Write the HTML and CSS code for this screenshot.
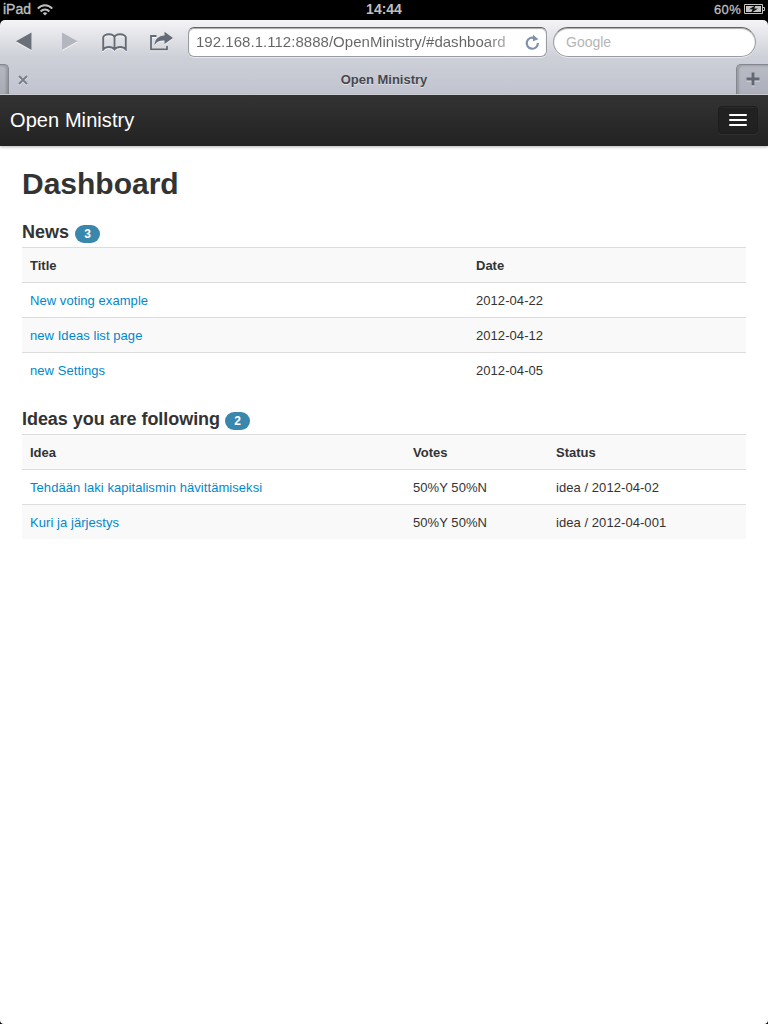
FILE: index.html
```html
<!DOCTYPE html>
<html lang="en">
<head>
<meta charset="utf-8">
<title>Open Ministry</title>
<link rel="stylesheet" href="styles.css">
</head>
<body>
<div class="device">
  <div class="status">
    <div class="status-left"><span class="carrier">iPad</span>
      <svg width="16" height="12" viewBox="0 0 16 12" fill="none" stroke="#bfbfbf" stroke-width="2"><path d="M.8 4.600C5 .2 11 .2 15.200 4.600"/><path d="M3.600 7.500c2.500-2.600 6.300-2.600 8.800 0"/><path d="M8 11.500 5.700 9.300c1.400-1.300 3.200-1.300 4.600 0z" fill="#bfbfbf" stroke="none"/></svg>
    </div>
    <div class="clock">14:44</div>
    <div class="status-right"><span class="percent">60%</span>
      <svg class="battery" width="21" height="11" viewBox="0 0 21 11"><path d="M.5.5h18v9H.5zM19 3.500h1.500v3H19" fill="none" stroke="#c4c4c4"/><path d="M2 2h15v6H2z" fill="#c4c4c4"/><path d="M11.500 1.200 5 5.300h3.600L7 9l7-4.600h-3.700z" fill="#111"/></svg>
    </div>
  </div>
  <div class="chrome">
    <div class="toolbar">
      <div class="tools">
        <svg class="tool back" width="16" height="19" viewBox="0 0 16 19"><path d="M15.500.5v17.500L0 9.200z" fill="#69707a"/></svg>
        <svg class="tool forward" width="16" height="19" viewBox="0 0 16 19"><path d="M0 .5v17.500l15.500-8.800z" fill="#b3b6bf"/></svg>
        <svg class="tool book" width="25" height="18" viewBox="0 0 25 18" fill="none" stroke="#646b76" stroke-width="1.900"><path d="M12.500 4.200C11 .2 3 .2 1.200 4.200v12.300c2.500-3.300 8.800-3.300 11.300 0 2.500-3.300 8.800-3.300 11.300 0V4.200C22 .2 14 .2 12.500 4.200zV16.500"/></svg>
        <svg class="tool share" width="25" height="20" viewBox="0 0 25 20"><path d="M7.500 5H2v13.300h16V15" fill="none" stroke="#646b76" stroke-width="1.800"/><path d="M15.500.8 24 7l-8.500 6V9.600c-4.500-.2-8 1.200-10 4.600.3-6 4-9.300 10-9.700z" fill="#646b76"/></svg>
      </div>
      <div class="address"><span class="url">192.168.1.112:8888/OpenMinistry/#dashboard</span>
        <svg width="15" height="17" viewBox="0 0 15 17"><path d="M9.500 4A5.600 5.600 0 1 0 12.900 9" fill="none" stroke="#7d90ae" stroke-width="2.200"/><path d="M8 .8 13.400 5.200 8 7.200z" fill="#7d90ae"/></svg>
      </div>
      <div class="search">Google</div>
    </div>
    <div class="tabs">
      <div class="tab-edge"></div>
      <div class="tab">
        <svg class="close" width="10" height="10" viewBox="0 0 10 10"><path d="m1 1 8 8M9 1 1 9" stroke="#7b7f88" stroke-width="2"/></svg>
        <span class="tab-title">Open Ministry</span>
      </div>
      <div class="tab-new"><svg class="plus" width="14" height="14" viewBox="0 0 14 14"><path d="M7 .5v13M.5 7h13" stroke="#626873" stroke-width="3"/></svg></div>
    </div>
  </div>
  <div class="navbar">
    <span class="brand">Open Ministry</span>
    <div class="menu"><i class="bar"></i><i class="bar"></i><i class="bar"></i></div>
  </div>
  <main class="page">
    <h1 class="title">Dashboard</h1>
    <h2 class="section">News <span class="badge">3</span></h2>
    <table class="table news">
      <colgroup><col class="news-title"><col></colgroup>
      <tr><th>Title</th><th>Date</th></tr>
      <tr><td><a class="link">New voting example</a></td><td>2012-04-22</td></tr>
      <tr><td><a class="link">new Ideas list page</a></td><td>2012-04-12</td></tr>
      <tr><td><a class="link">new Settings</a></td><td>2012-04-05</td></tr>
    </table>
    <h2 class="section ideas"><span>Ideas you are following</span> <span class="badge">2</span></h2>
    <table class="table">
      <colgroup><col class="idea-title"><col class="idea-votes"><col></colgroup>
      <tr><th>Idea</th><th>Votes</th><th>Status</th></tr>
      <tr><td><a class="link">Tehdään laki kapitalismin hävittämiseksi</a></td><td>50%Y 50%N</td><td>idea / 2012-04-02</td></tr>
      <tr><td><a class="link">Kuri ja järjestys</a></td><td>50%Y 50%N</td><td>idea / 2012-04-001</td></tr>
    </table>
  </main>
</div>
</body>
</html>
```
FILE: styles.css
```css
* { box-sizing: border-box; }
body { margin: 0; background: #000; color: #333; font: 13px/18px "Liberation Sans", Arial, sans-serif; }
svg { display: block; flex: none; }
.device { width: 768px; height: 1024px; display: flex; flex-direction: column; overflow: hidden; }

.status { height: 20px; display: grid; grid-template-columns: 1fr auto 1fr; color: #bfbfbf; font-size: 14px; line-height: 19px; background: #000; }
.status-left { display: flex; align-items: center; gap: 6px; padding: 0 0 1px 3px; }
.carrier { -webkit-text-stroke: .35px #bfbfbf; }
.clock { font-weight: bold; }
.status-right { display: flex; justify-content: flex-end; align-items: center; gap: 3px; padding: 0 3px 1px 0; }
.percent { font-size: 13px; letter-spacing: .3px; -webkit-text-stroke: .3px #bfbfbf; }

.chrome { height: 75px; border-radius: 5px 5px 0 0; background: linear-gradient(#f4f4f6, #ced0d8 50%, #c1c4cf); border-bottom: 1px solid #d6d8df; }
.toolbar { height: 44px; display: flex; align-items: center; padding-right: 12px; }
.tools { width: 188px; display: flex; align-items: center; padding: 0 0 1px 16px; }
.tool { filter: drop-shadow(0 1px 0 rgba(255,255,255,.7)); }
.forward { margin-left: 30px; }
.book { margin-left: 24px; }
.share { margin: 0 0 2px 22px; }
.address, .search { height: 30px; background: #fff; border: 1px solid #999ca3; border-top-color: #606268; box-shadow: inset 0 1px 1px #aaa, 0 1px 0 #e8e9ed; display: flex; align-items: center; }
.address { width: 359px; border-radius: 6px; padding: 0 6px 0 7px; justify-content: space-between; }
.url { font-size: 15px; letter-spacing: .03px; white-space: nowrap; color: transparent; background: linear-gradient(90deg, #646464 93%, #aaa); background-clip: text; -webkit-background-clip: text; }
.search { width: 203px; margin-left: 6px; border-radius: 15px; padding-left: 12px; color: #b5b5b5; font-size: 14px; }
.tabs { height: 30px; display: flex; }
.tab-edge { width: 9px; background: linear-gradient(#b5b7c0, #a9abb5); border: 1px solid #85878f; border-left: 0; border-bottom: 0; border-radius: 0 5px 0 0; box-shadow: inset -2px 1px 2px rgba(0,0,0,.15); }
.tab { flex: 1; display: grid; grid-template-columns: 1fr auto 1fr; align-items: center; padding: 1px 0 0 9px; }
.tab-title { font-weight: bold; color: #454850; text-shadow: 0 1px 0 #e0e2e8; grid-column: 2; margin: 1px -14px 0 0; }
.close { filter: drop-shadow(0 1px 0 #e0e2e8); }
.tab-new { width: 32px; background: linear-gradient(#b9bbc4, #adb0bb); border: 1px solid #85878f; border-right: 0; border-bottom: 0; border-radius: 5px 0 0 0; box-shadow: inset 2px 1px 2px rgba(0,0,0,.15); display: flex; align-items: center; justify-content: center; }
.plus { margin-bottom: 1px; filter: drop-shadow(0 1px 0 #dfe0e6); }

.navbar { height: 51px; flex: none; display: flex; justify-content: space-between; align-items: center; padding: 0 10px 1px; background: linear-gradient(#333, #222); box-shadow: 0 1px 3px rgba(0,0,0,.3); z-index: 1; }
.brand { color: #fff; font-size: 20px; line-height: 24px; letter-spacing: .08px; margin-bottom: 1px; }
.menu { width: 40px; height: 28px; margin-bottom: 1px; padding: 0 10px; border: 1px solid #1d1d1d; border-radius: 4px; background: #212121; box-shadow: inset 0 1px 0 #2b2b2b, 0 1px 0 #303030; display: flex; flex-direction: column; justify-content: center; gap: 3px; }
.bar { height: 2px; background: #fff; border-radius: 1px; }

.page { flex: 1; background: #fff; padding: 20px 22px; border-radius: 0 0 4px 4px; }
.title { margin: 0; font-size: 30px; line-height: 36px; }
.section { margin: 17px 0 0; height: 28px; display: flex; align-items: flex-start; gap: 6px; font-size: 18px; line-height: 27px; }
.ideas { gap: 5px; letter-spacing: -.045px; }
.badge { margin-top: 6px; width: 25px; height: 18px; border-radius: 9px; background: #3a87ad; color: #fff; font-size: 12px; line-height: 18px; text-align: center; }
.table { width: 100%; table-layout: fixed; border-collapse: separate; border-spacing: 0; }
.news + .section { margin-top: 19px; }
.table th, .table td { height: 35px; padding: 9px 8px 7px; border-top: 1px solid #ddd; text-align: left; line-height: 18px; }
.table td { letter-spacing: .06px; }
.table tr:nth-child(odd) { background: #f9f9f9; }
.news-title { width: 446px; }
.idea-title { width: 383px; }
.idea-votes { width: 143px; }
.link { color: #08c; }
```
